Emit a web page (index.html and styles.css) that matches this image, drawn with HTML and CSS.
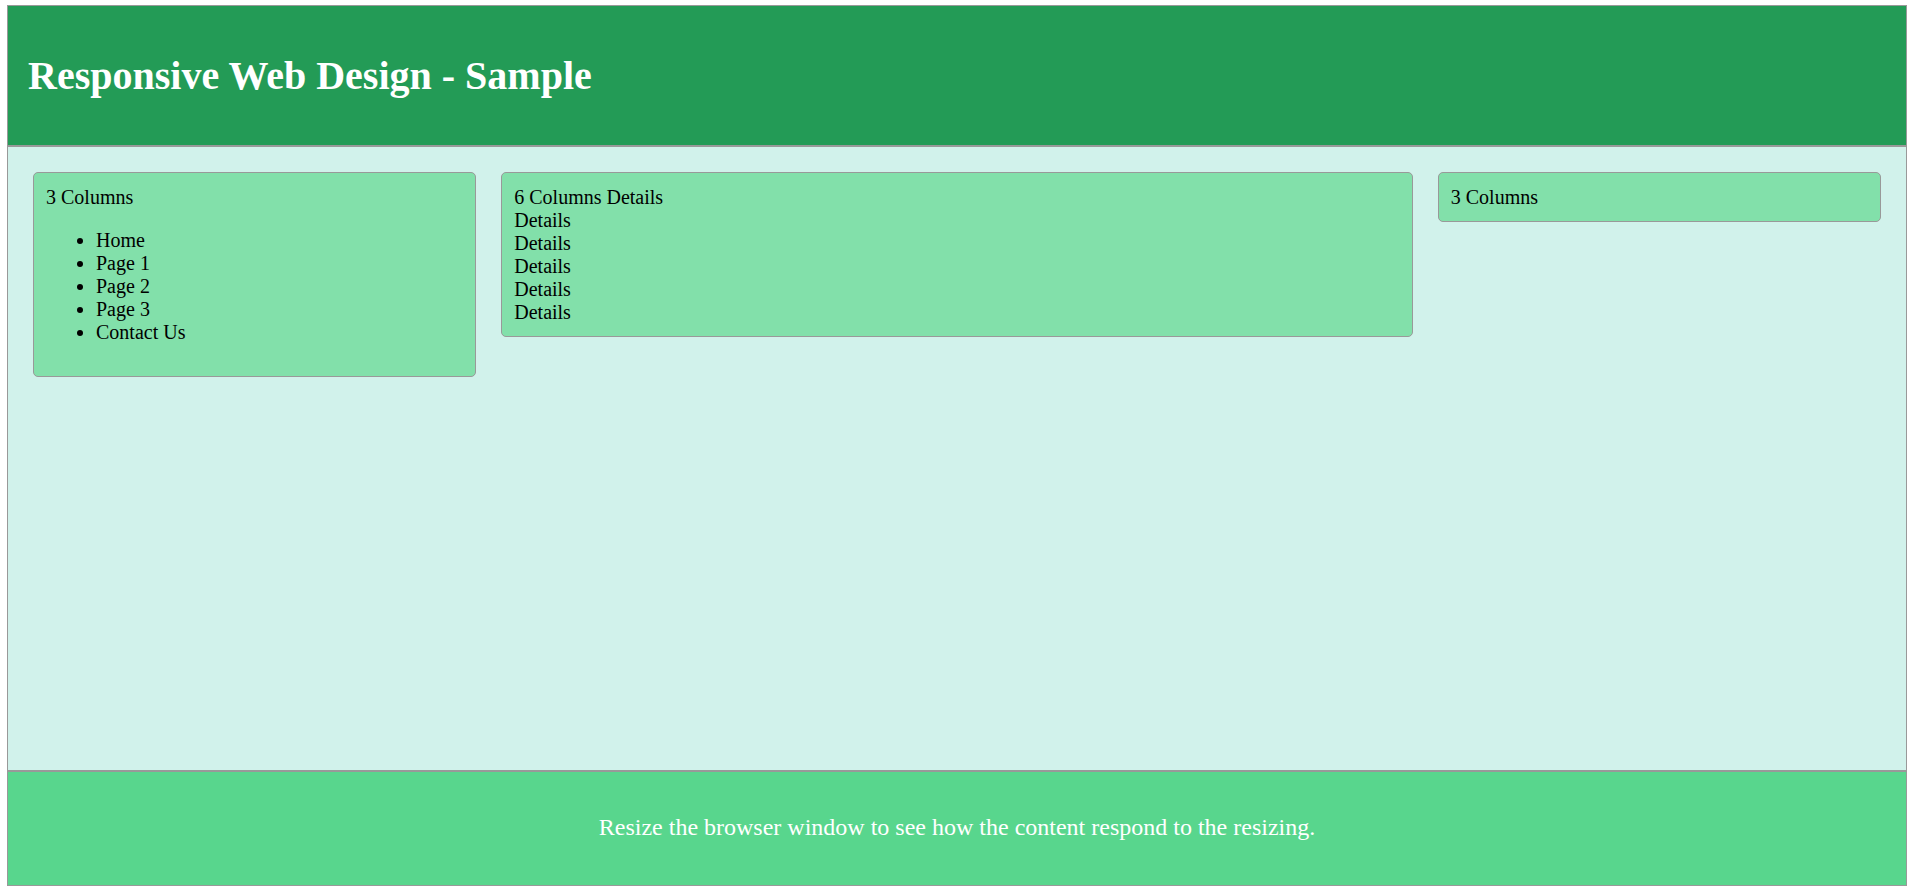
FILE: index.html
```html
<!DOCTYPE html>
<html lang="en">
<head>
<meta charset="utf-8">
<title>Responsive Web Design - Sample</title>
<link rel="stylesheet" href="styles.css">
</head>
<body>
<div class="page">
  <header class="header">
    <h1 class="title">Responsive Web Design - Sample</h1>
  </header>
  <main class="main">
    <div class="grid">
      <div class="card col-3">
        3 Columns
        <ul class="menu">
          <li>Home</li>
          <li>Page 1</li>
          <li>Page 2</li>
          <li>Page 3</li>
          <li>Contact Us</li>
        </ul>
      </div>
      <div class="card col-6">
        6 Columns Details<br>Details<br>Details<br>Details<br>Details<br>Details
      </div>
      <div class="card col-3">
        3 Columns
      </div>
    </div>
  </main>
  <footer class="footer">
    <p class="footer-text">Resize the browser window to see how the content respond to the resizing.</p>
  </footer>
</div>
</body>
</html>
```
FILE: styles.css
```css
* { box-sizing: border-box; }

html, body { height: 100%; }

body {
  margin: 5px 6px 8px 7px;
  height: calc(100% - 13px);
  font-family: "Liberation Serif", "Times New Roman", serif;
  font-size: 20px;
  color: #000;
  background: #fff;
}

.page {
  display: flex;
  flex-direction: column;
  height: 100%;
}

.header {
  background: #239b56;
  border: 1px solid #999;
  padding: 47px 20px 46px;
}

.title {
  margin: 0;
  font-size: 40px;
  font-weight: bold;
  line-height: 46px;
  color: #fff;
}

.main {
  flex: 1;
  background: #d1f2eb;
  border: 1px solid #999;
  padding: 25px;
}

.grid {
  display: grid;
  grid-template-columns: repeat(4, 1fr);
  column-gap: 25px;
  align-items: start;
}

.card {
  background: #82e0aa;
  border: 1px solid #999;
  border-radius: 5px;
  padding: 12.5px 12px;
  line-height: 23px;
}

.col-3 { grid-column: span 1; }
.col-6 { grid-column: span 2; }

.menu {
  margin: 20px 0;
  padding-left: 50px;
}

.footer {
  background: #58d68d;
  border: 1px solid #999;
  padding: 41px 20px 44px;
  text-align: center;
}

.footer-text {
  margin: 0;
  font-size: 24px;
  line-height: 28px;
  color: #fff;
}
```
